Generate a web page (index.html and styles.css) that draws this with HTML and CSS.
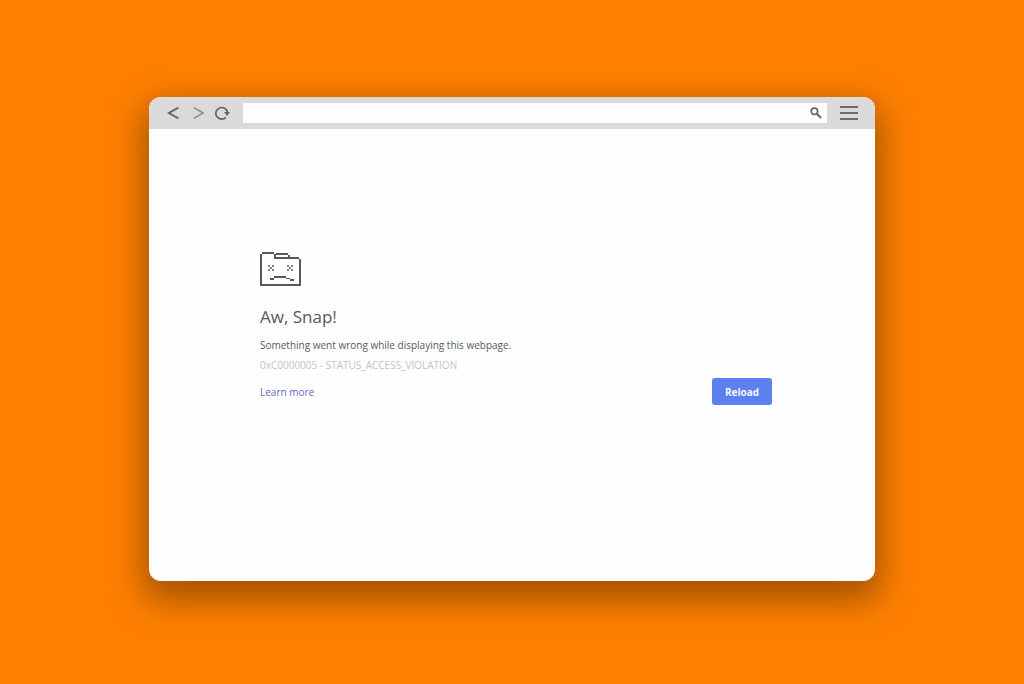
FILE: index.html
```html
<!DOCTYPE html>
<html lang="en">
<head>
<meta charset="utf-8">
<meta name="viewport" content="width=device-width, initial-scale=1">
<title>Aw, Snap!</title>
<link rel="stylesheet" href="styles.css">
</head>
<body>
<div class="window">
  <header class="toolbar">
    <nav class="nav" aria-label="Browser navigation">
      <button class="icon-button" type="button" aria-label="Back">
        <svg width="14" height="14" viewBox="0 0 14 14" fill="none" stroke="#626468" stroke-width="1.8"><path d="M12.4 1.6 2.8 7l9.6 5.4"/></svg>
      </button>
      <button class="icon-button" type="button" aria-label="Forward">
        <svg width="14" height="14" viewBox="0 0 14 14" fill="none" stroke="#8b8c8e" stroke-width="1.5"><path d="M3.8 1.6 13.2 7l-9.4 5.4"/></svg>
      </button>
      <button class="icon-button" type="button" aria-label="Refresh">
        <svg width="16" height="14" viewBox="0 0 16 14"><path d="M11.9 11.3A5.8 5.8 0 1 1 13.4 6.5" fill="none" stroke="#626468" stroke-width="1.7"/><path d="M10 6h6l-3 4z" fill="#626468"/></svg>
      </button>
    </nav>
    <div class="address">
      <input class="address-input" type="text" aria-label="Address">
      <button class="icon-button" type="button" aria-label="Search">
        <svg width="12" height="12" viewBox="0 0 12 12" fill="none" stroke="#66686b"><circle cx="4.4" cy="4.3" r="3.2" stroke-width="1.7"/><path d="m6.8 6.7 4.3 4.2" stroke-width="2.1"/></svg>
      </button>
    </div>
    <button class="icon-button" type="button" aria-label="Menu">
      <svg width="18" height="16" viewBox="0 0 18 16" fill="#6a6b6e"><path d="M0 1h18v2H0zM0 7h18v2H0zM0 13h18v2H0z"/></svg>
    </button>
  </header>
  <main class="page">
    <svg class="sad-folder" width="42" height="36" viewBox="0 0 42 36" fill="#57585b" shape-rendering="crispEdges" aria-hidden="true">
      <path d="M0 3h2v30h37V8h2v27H0zM2 1h12v2H2zM14 3h2v3h12v2H14zM16 2h12v2H16zM28 4h2v2h9v2H28z"/>
      <path d="M8 14h2v2H8zM12 14h2v2h-2zM10 16h2v2h-2zM8 18h2v2H8zM12 18h2v2h-2zM27 14h2v2h-2zM31 14h2v2h-2zM29 16h2v2h-2zM27 18h2v2h-2zM31 18h2v2h-2z" opacity=".75"/>
      <path d="M14 25h12v2H14zM10 27h4v2h-4zM26 27h4v1h-4zM30 28h4v2h-4z"/>
    </svg>
    <h1 class="title">Aw, Snap!</h1>
    <p class="message">Something went wrong while displaying this webpage.</p>
    <p class="code">0xC0000005 - STATUS_ACCESS_VIOLATION</p>
    <div class="actions">
      <a class="link" href="#">Learn more</a>
      <button class="reload" type="button">Reload</button>
    </div>
  </main>
</div>
</body>
</html>
```
FILE: styles.css
```css
* {
  box-sizing: border-box;
}

body {
  display: flex;
  min-height: 100vh;
  margin: 0;
  padding: 97px 149px 103px;
  background: #ff8000;
  font-family: "Open Sans", "Noto Sans", sans-serif;
  color: #58595b;
}

.window {
  display: flex;
  flex: 1;
  flex-direction: column;
  min-width: 0;
  border-radius: 12px;
  background: #fefefe;
  box-shadow: 0 14px 36px 6px rgba(0, 0, 0, 0.36);
}

.toolbar {
  display: flex;
  align-items: center;
  gap: 13px;
  height: 32px;
  padding: 0 17px;
  border-radius: 12px 12px 0 0;
  background: #dadada;
}

.nav {
  display: flex;
  align-items: center;
  gap: 10px;
}

.icon-button {
  display: flex;
  padding: 0;
  border: 0;
  background: none;
}

.address {
  display: flex;
  flex: 1;
  align-items: center;
  height: 20px;
  padding-right: 5px;
  background: #fefefe;
}

.address-input {
  flex: 1;
  min-width: 0;
  border: 0;
  outline: 0;
  background: none;
  font: inherit;
  font-size: 11px;
}

.page {
  padding: 122px 103px 24px 111px;
}

.sad-folder {
  display: block;
}

.title {
  margin: 16px 0 0;
  font-size: 17px;
  font-weight: 400;
  line-height: 28px;
}

.message,
.code {
  margin: 4px 0 0;
  font-size: 10px;
  line-height: 20px;
}

.code {
  margin: 0;
  color: #c4c4c4;
}

.actions {
  display: flex;
  align-items: center;
  justify-content: space-between;
  margin-top: 3px;
}

.link {
  color: #6668c4;
  font-size: 10px;
  text-decoration: none;
}

.reload {
  width: 60px;
  height: 27px;
  padding: 0;
  border: 0;
  border-radius: 3px;
  background: #5c80ee;
  color: #f4f6ff;
  font: inherit;
  font-size: 10px;
  font-weight: 700;
}
```
